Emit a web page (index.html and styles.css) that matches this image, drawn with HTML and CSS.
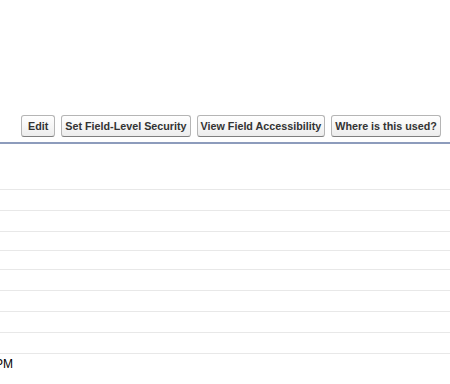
FILE: index.html
```html
<!DOCTYPE html>
<html>
<head>
<meta charset="utf-8">
<link rel="stylesheet" href="styles.css">
</head>
<body>
<div class="block">
  <div class="header">
    <div class="buttons">
      <button class="btn">&nbsp;Edit&nbsp;</button>
      <button class="btn">Set Field-Level Security</button>
      <button class="btn">View Field Accessibility</button>
      <button class="btn">Where is this used?</button>
    </div>
  </div>
  <div class="rows">
    <div class="row tall"></div>
    <div class="row"></div>
    <div class="row"></div>
    <div class="row short"></div>
    <div class="row short"></div>
    <div class="row"></div>
    <div class="row"></div>
    <div class="row"></div>
    <div class="row"></div>
    <div class="row last"><span class="cut">PM</span></div>
  </div>
</div>
</body>
</html>
```

FILE: styles.css
```css
html, body {
  margin: 0;
  padding: 0;
  background: #ffffff;
}
body {
  font-family: Arial, "Liberation Sans", sans-serif;
  font-size: 12px;
  color: #000;
  width: 450px;
  height: 384px;
  overflow: hidden;
}
.header {
  padding-top: 115px;
  padding-bottom: 5px;
  border-bottom: 2px solid #8d9cbc;
}
.buttons {
  display: flex;
  gap: 6px;
  padding-left: 21px;
}
.btn {
  font-family: Arial, "Liberation Sans", sans-serif;
  font-size: 10.75px;
  font-weight: bold;
  color: #333;
  height: 22px;
  line-height: 14px;
  padding: 3px 3px;
  margin: 0;
  border: 1px solid #b5b5b5;
  border-bottom-color: #7f7f7f;
  border-radius: 3px;
  background: linear-gradient(#ffffff, #ededed);
  box-sizing: border-box;
  white-space: nowrap;
}
.row {
  height: 20px;
  border-bottom: 1px solid #e8e8e8;
}
.row.tall {
  height: 45px;
}
.row.short {
  height: 18px;
}
.row.last {
  border-bottom: none;
  padding-top: 3px;
  line-height: 15px;
}
.cut {
  display: inline-block;
  margin-left: -5px;
}
```
